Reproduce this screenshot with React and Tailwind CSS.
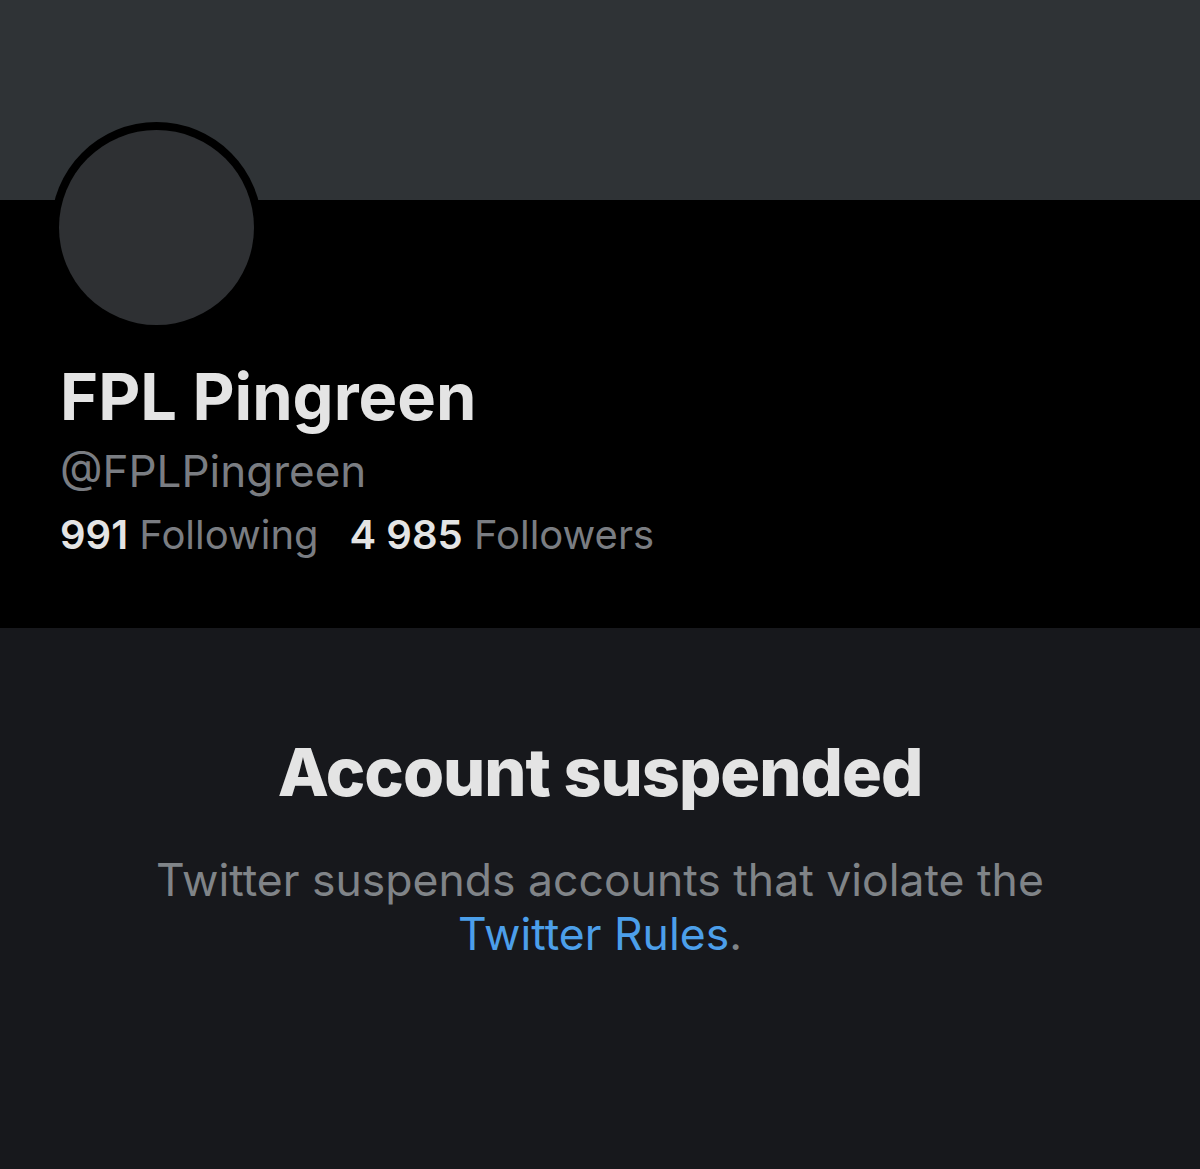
export default function App() {
  return (
    <div className="w-[1200px] h-[1169px] flex flex-col bg-[#17181c] font-['Inter','Liberation_Sans',sans-serif] overflow-hidden">
      {/* banner */}
      <div className="h-[200px] bg-[#2f3336] shrink-0" />

      {/* profile header */}
      <div className="relative h-[428px] bg-black shrink-0 px-[60px]">
        <div className="absolute left-[51px] top-[-78px] w-[211px] h-[211px] rounded-full bg-black p-[8px]">
          <div className="w-full h-full rounded-full bg-[#2e3033]" />
        </div>

        <div className="pt-[161px]">
          <h1 className="text-[65px] leading-[72px] font-bold text-[#e4e4e4]">
            FPL Pingreen
          </h1>
          <p className="text-[44px] leading-[56px] text-[#7a7d82] mt-[10px]">@FPLPingreen</p>
          <div className="flex gap-[31px] text-[40px] leading-[56px] mt-[8px]">
            <span>
              <span className="font-semibold text-[#e4e4e4]">991</span>{" "}
              <span className="text-[#7a7d82]">Following</span>
            </span>
            <span>
              <span className="font-semibold text-[#e4e4e4]">4 985</span>{" "}
              <span className="text-[#7a7d82]">Followers</span>
            </span>
          </div>
        </div>
      </div>

      {/* suspended notice */}
      <div className="flex flex-col items-center pt-[106px] text-center">
        <h2 className="text-[66.5px] leading-[76px] font-extrabold text-[#e4e4e4] tracking-[-1px]">
          Account suspended
        </h2>
        <p className="mt-[43px] w-[960px] text-[44.5px] leading-[54px] text-[#808488]">
          Twitter suspends accounts that violate the{" "}
          <span className="text-[#4c9fea]">Twitter Rules</span>.
        </p>
      </div>
    </div>
  );
}
